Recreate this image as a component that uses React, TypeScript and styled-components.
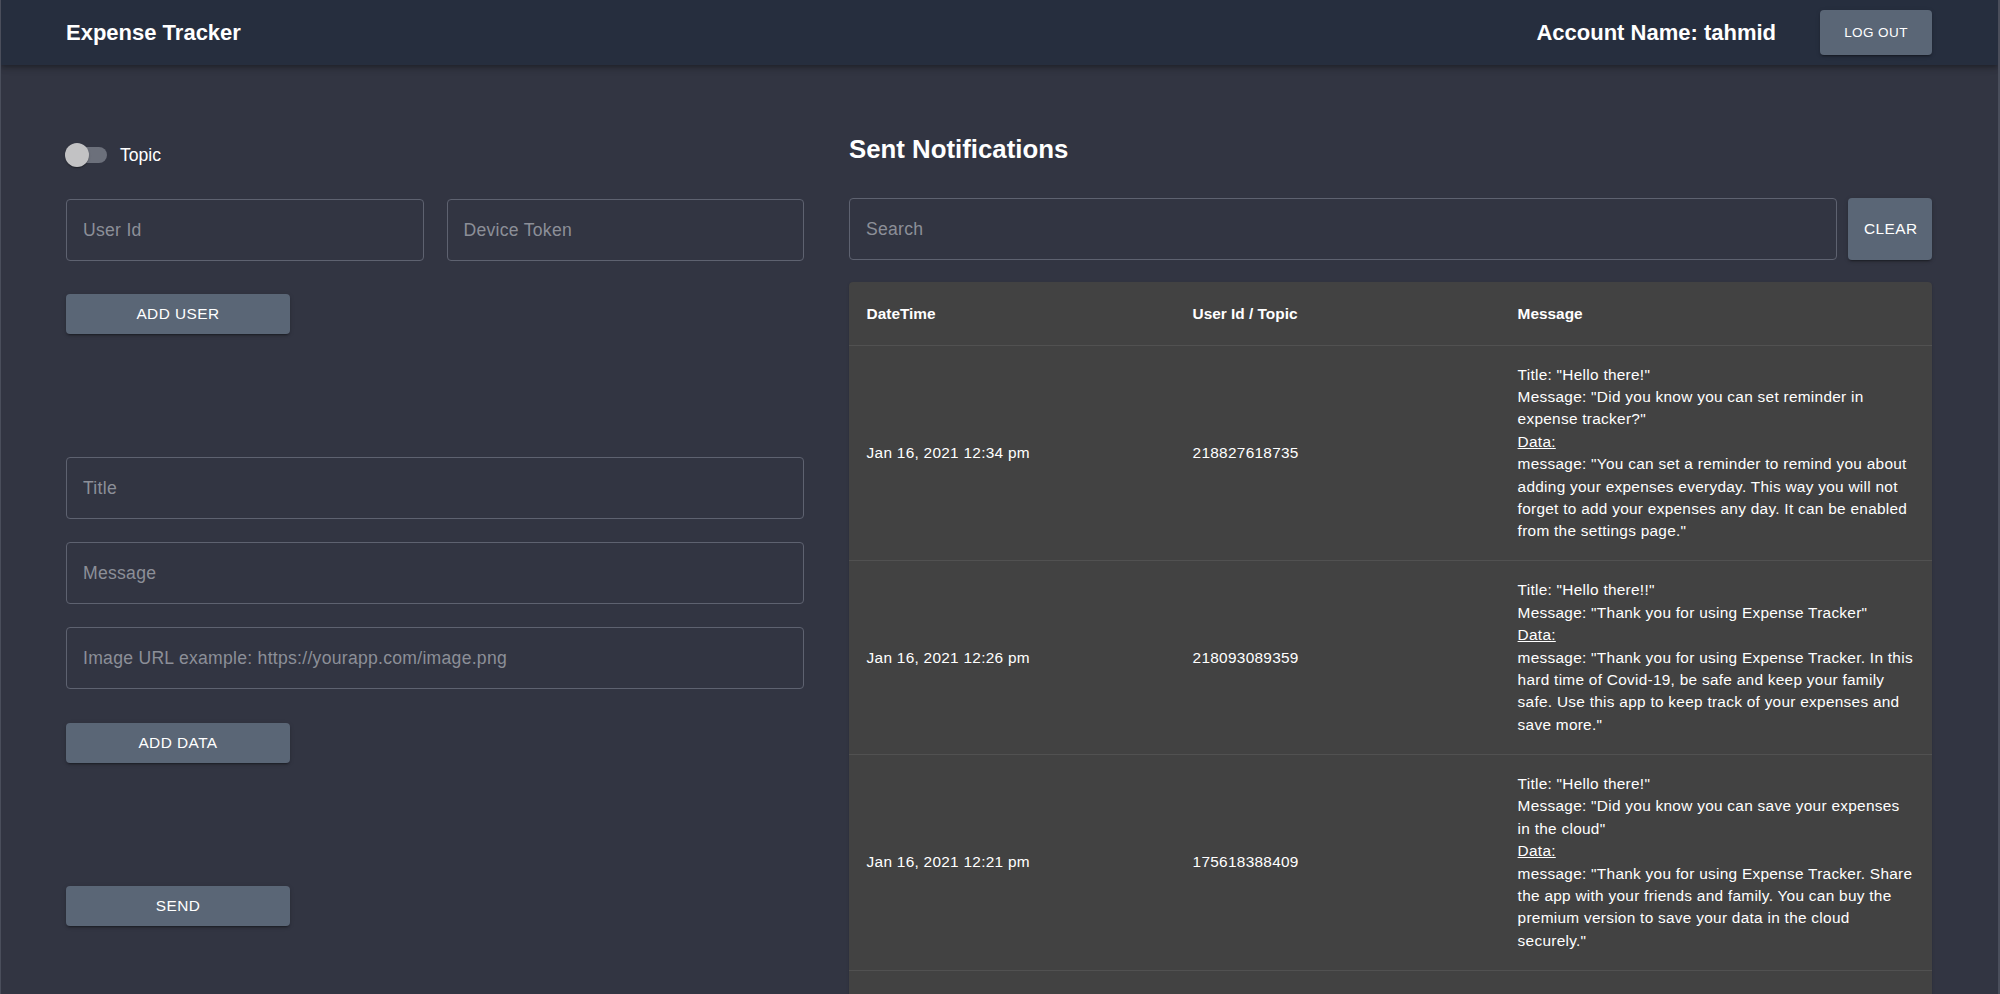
import React from "react";
import styled, { createGlobalStyle } from "styled-components";

const GlobalStyle = createGlobalStyle`
  html, body {
    margin: 0;
    padding: 0;
    height: 994px;
    overflow: hidden;
    background: #323542;
  }
  body {
    font-family: "Liberation Sans", Arial, Helvetica, sans-serif;
    color: #ffffff;
  }
  * { box-sizing: border-box; }
`;

const Page = styled.div`
  height: 994px;
  overflow: hidden;
  background: #323542;
  border-left: 1px solid #4a4e5b;
  border-right: 2px solid #4a4e5b;
`;

const AppBar = styled.header`
  height: 65px;
  background: #262e3e;
  display: flex;
  align-items: center;
  padding: 0 66px 0 65px;
  box-shadow: 0 2px 4px -1px rgba(0, 0, 0, 0.2), 0 4px 5px 0 rgba(0, 0, 0, 0.14),
    0 1px 10px 0 rgba(0, 0, 0, 0.12);
  position: relative;
  z-index: 2;
`;

const Brand = styled.h1`
  margin: 0;
  font-size: 22px;
  font-weight: 700;
  flex: 1;
  color: #ffffff;
`;

const AccountName = styled.div`
  font-size: 22px;
  font-weight: 700;
  margin-right: 44px;
`;

const Button = styled.button<{ $w?: number; $h: number; $fs: number }>`
  width: ${(p) => (p.$w ? `${p.$w}px` : "auto")};
  height: ${(p) => p.$h}px;
  padding: 0 16px;
  border: none;
  border-radius: 4px;
  background: #5a6676;
  color: #ffffff;
  font-family: "Liberation Sans", Arial, sans-serif;
  font-size: ${(p) => p.$fs}px;
  letter-spacing: 0.03em;
  text-transform: uppercase;
  cursor: pointer;
  flex-shrink: 0;
  box-shadow: 0 3px 1px -2px rgba(0, 0, 0, 0.2), 0 2px 2px 0 rgba(0, 0, 0, 0.14),
    0 1px 5px 0 rgba(0, 0, 0, 0.12);
`;

const Main = styled.main`
  display: grid;
  grid-template-columns: 738px 1fr;
  column-gap: 45px;
  padding: 69px 66px 0 65px;
  align-items: start;
`;

const LeftColumn = styled.section`
  display: flex;
  flex-direction: column;
  align-items: flex-start;
`;

const Spaced = styled.div<{ $mt: number }>`
  margin-top: ${(p) => p.$mt}px;
  width: 100%;
`;

const ToggleRow = styled.label`
  display: flex;
  align-items: center;
  height: 42px;
  gap: 13px;
  font-size: 17.6px;
  cursor: pointer;
`;

const Track = styled.span`
  position: relative;
  display: block;
  width: 40px;
  height: 16px;
  margin-left: 1px;
  border-radius: 8px;
  background: #6c707b;
`;

const Thumb = styled.span`
  position: absolute;
  left: -2px;
  top: -4px;
  width: 24px;
  height: 24px;
  border-radius: 50%;
  background: #c2c2c4;
  box-shadow: 0 2px 1px -1px rgba(0, 0, 0, 0.2), 0 1px 1px 0 rgba(0, 0, 0, 0.14),
    0 1px 3px 0 rgba(0, 0, 0, 0.12);
`;

const InputRow = styled.div`
  display: grid;
  grid-template-columns: 1fr 1fr;
  gap: 23px;
  width: 100%;
`;

const TextInput = styled.input`
  display: block;
  width: 100%;
  height: 62px;
  padding: 0 16px;
  background: transparent;
  border: 1px solid #5e6270;
  border-radius: 4px;
  color: #ffffff;
  font-family: "Liberation Sans", Arial, sans-serif;
  font-size: 17.6px;
  letter-spacing: 0.27px;
  outline: none;
  &::placeholder {
    color: #8c8f98;
    opacity: 1;
  }
`;

const RightColumn = styled.section`
  display: flex;
  flex-direction: column;
`;

const Heading = styled.h2`
  margin: 0;
  font-size: 25.8px;
  line-height: 30px;
  font-weight: 700;
`;

const SearchRow = styled.div`
  display: flex;
  gap: 11px;
  margin-top: 34px;
`;

const TablePaper = styled.div`
  margin-top: 22px;
  background: #424242;
  border-radius: 4px;
  box-shadow: 0 2px 1px -1px rgba(0, 0, 0, 0.2), 0 1px 1px 0 rgba(0, 0, 0, 0.14),
    0 1px 3px 0 rgba(0, 0, 0, 0.12);
  overflow: hidden;
`;

const Table = styled.table`
  width: 100%;
  border-collapse: collapse;
  table-layout: fixed;
`;

const HeadCell = styled.th`
  text-align: left;
  font-size: 15.4px;
  font-weight: 700;
  line-height: 27.4px;
  padding: 17.6px;
  border-bottom: 1px solid #515151;
  color: #ffffff;
`;

const Cell = styled.td`
  font-size: 15.4px;
  line-height: 22.4px;
  letter-spacing: 0.28px;
  padding: 18px 17.6px 17.6px;
  border-bottom: 1px solid #515151;
  vertical-align: middle;
  color: #ffffff;
`;

const DataLabel = styled.span`
  text-decoration: underline;
  display: block;
`;

const Line = styled.span`
  display: block;
`;

type Notification = {
  date: string;
  id: string;
  title: string;
  message: string;
  data: string;
};

const notifications: Notification[] = [
  {
    date: "Jan 16, 2021 12:34 pm",
    id: "218827618735",
    title: "Hello there!",
    message: "Did you know you can set reminder in expense tracker?",
    data:
      "You can set a reminder to remind you about adding your expenses everyday. This way you will not forget to add your expenses any day. It can be enabled from the settings page.",
  },
  {
    date: "Jan 16, 2021 12:26 pm",
    id: "218093089359",
    title: "Hello there!!",
    message: "Thank you for using Expense Tracker",
    data:
      "Thank you for using Expense Tracker. In this hard time of Covid-19, be safe and keep your family safe. Use this app to keep track of your expenses and save more.",
  },
  {
    date: "Jan 16, 2021 12:21 pm",
    id: "175618388409",
    title: "Hello there!",
    message: "Did you know you can save your expenses in the cloud",
    data:
      "Thank you for using Expense Tracker. Share the app with your friends and family. You can buy the premium version to save your data in the cloud securely.",
  },
  {
    date: "Jan 16, 2021 12:15 pm",
    id: "218093089359",
    title: "Hello there!!",
    message: "Thank you for using Expense Tracker",
    data:
      "Keep track of your daily expenses and see where your money goes every month.",
  },
];

export default function App() {
  return (
    <>
      <GlobalStyle />
      <Page>
        <AppBar>
          <Brand>Expense Tracker</Brand>
          <AccountName>Account Name: tahmid</AccountName>
          <Button $w={112} $h={45} $fs={13.5}>
            Log out
          </Button>
        </AppBar>
        <Main>
          <LeftColumn>
            <ToggleRow>
              <Track>
                <Thumb />
              </Track>
              Topic
            </ToggleRow>
            <Spaced $mt={23}>
              <InputRow>
                <TextInput placeholder="User Id" />
                <TextInput placeholder="Device Token" />
              </InputRow>
            </Spaced>
            <Spaced $mt={33}>
              <Button $w={224} $h={40} $fs={15.4}>
                Add user
              </Button>
            </Spaced>
            <Spaced $mt={123}>
              <TextInput placeholder="Title" />
            </Spaced>
            <Spaced $mt={23}>
              <TextInput placeholder="Message" />
            </Spaced>
            <Spaced $mt={23}>
              <TextInput placeholder="Image URL example: https://yourapp.com/image.png" />
            </Spaced>
            <Spaced $mt={34}>
              <Button $w={224} $h={40} $fs={15.4}>
                Add data
              </Button>
            </Spaced>
            <Spaced $mt={123}>
              <Button $w={224} $h={40} $fs={15.4}>
                Send
              </Button>
            </Spaced>
          </LeftColumn>
          <RightColumn>
            <Heading>Sent Notifications</Heading>
            <SearchRow>
              <TextInput placeholder="Search" />
              <Button $w={84} $h={62} $fs={15.4}>
                Clear
              </Button>
            </SearchRow>
            <TablePaper>
              <Table>
                <colgroup>
                  <col style={{ width: 326 }} />
                  <col style={{ width: 325 }} />
                  <col />
                </colgroup>
                <thead>
                  <tr>
                    <HeadCell>DateTime</HeadCell>
                    <HeadCell>User Id / Topic</HeadCell>
                    <HeadCell>Message</HeadCell>
                  </tr>
                </thead>
                <tbody>
                  {notifications.map((n, i) => (
                    <tr key={i}>
                      <Cell>{n.date}</Cell>
                      <Cell>{n.id}</Cell>
                      <Cell>
                        <Line>Title: "{n.title}"</Line>
                        <Line>Message: "{n.message}"</Line>
                        <DataLabel>Data:</DataLabel>
                        <Line>message: "{n.data}"</Line>
                      </Cell>
                    </tr>
                  ))}
                </tbody>
              </Table>
            </TablePaper>
          </RightColumn>
        </Main>
      </Page>
    </>
  );
}
